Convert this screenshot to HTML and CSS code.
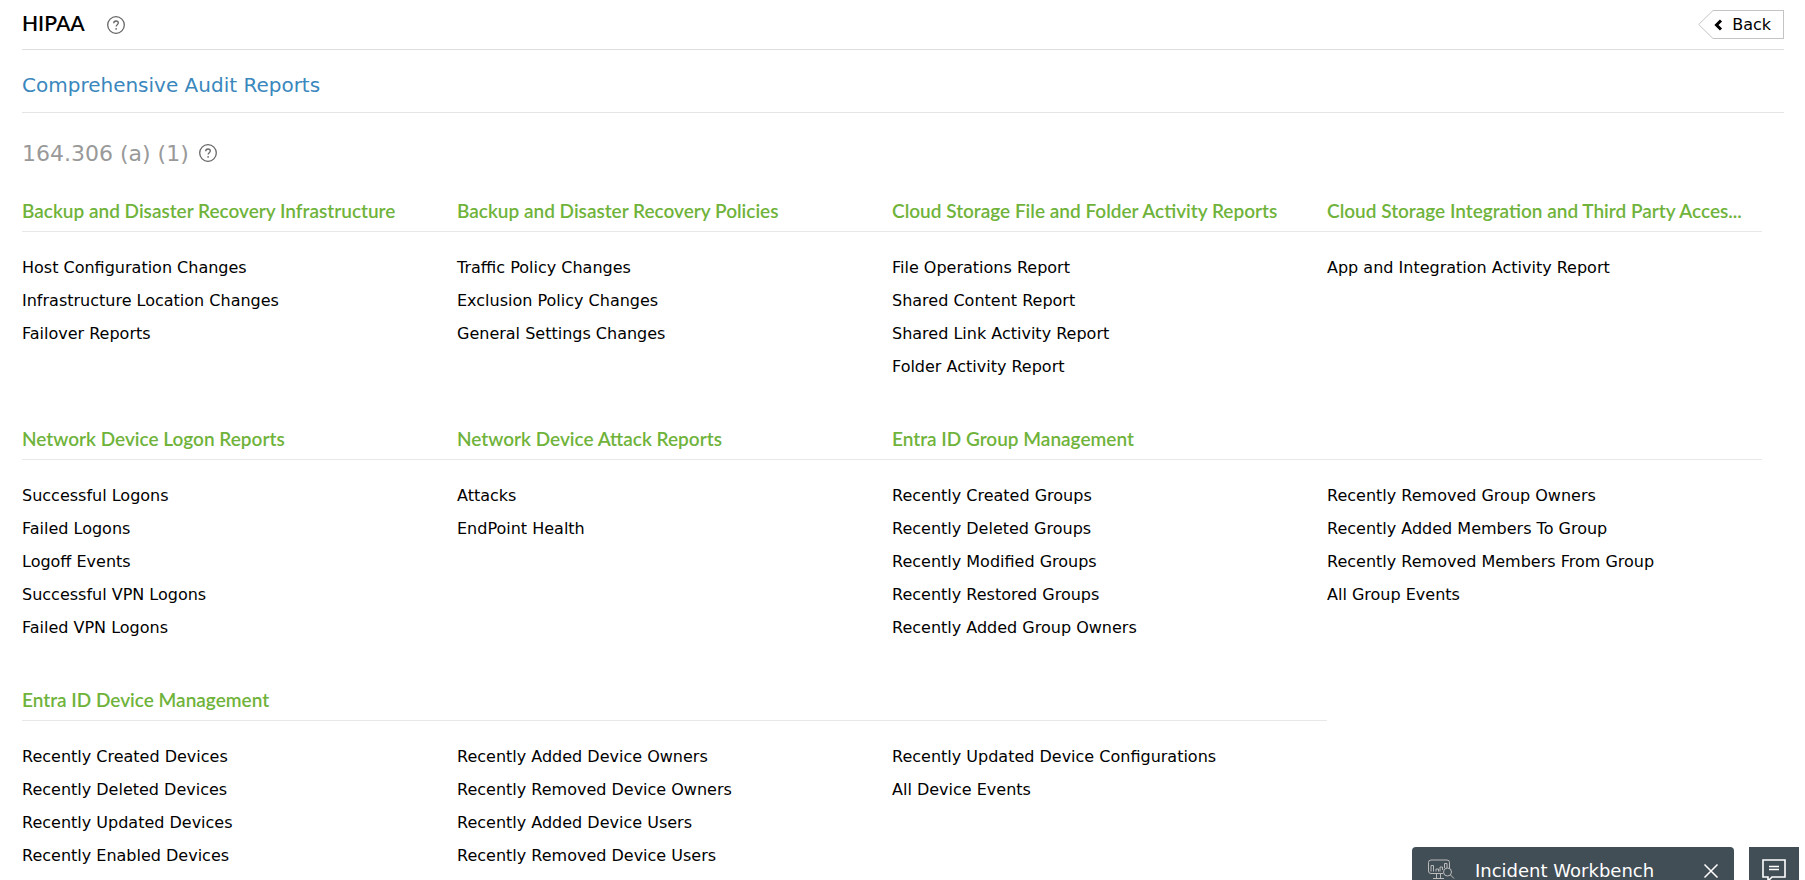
FILE: index.html
```html
<!DOCTYPE html>
<html lang="en">
<head>
  <meta charset="UTF-8" />
  <meta name="viewport" content="width=device-width, initial-scale=1.0"/>
  <title>HIPAA - Comprehensive Audit Reports</title>
  <link rel="stylesheet" href="styles.css">
</head>
<body>
  <div class="container">
    <header class="page-header">
      <h1>HIPAA</h1>
      <button type="button" class="help" aria-label="Help">
        <svg width="18" height="18" viewBox="0 0 18 18"><circle cx="9" cy="9" r="8.3"/><path d="M6.7 7.2C6.8 5.7 7.7 5 9 5c1.400 0 2.300.8 2.300 2 0 1.600-2.200 1.700-2.200 3.500M9.100 12v1.800"/></svg>
      </button>
      <button type="button" class="back">
        <svg class="back-tip" width="16" height="29" viewBox="0 0 16 29"><path d="M16 .5h-1L.7 14.500 15 28.500h1"/></svg>
        <span class="back-body">
          <svg width="9" height="12" viewBox="0 0 9 12"><path d="M7 1.500 2.500 6 7 10.500"/></svg>
          Back
        </span>
      </button>
    </header>

    <div class="report-title">
      <a href="#">Comprehensive Audit Reports</a>
    </div>

    <div class="section-title">
      <h2>164.306 (a) (1)</h2>
      <button type="button" class="help" aria-label="Help">
        <svg width="18" height="18" viewBox="0 0 18 18"><circle cx="9" cy="9" r="8.3"/><path d="M6.7 7.2C6.8 5.7 7.7 5 9 5c1.400 0 2.300.8 2.300 2 0 1.600-2.200 1.700-2.200 3.500M9.100 12v1.800"/></svg>
      </button>
    </div>

    <main class="groups">
      <section class="group">
        <h3>Backup and Disaster Recovery Infrastructure</h3>
        <ul>
          <li><a href="#">Host Configuration Changes</a></li>
          <li><a href="#">Infrastructure Location Changes</a></li>
          <li><a href="#">Failover Reports</a></li>
        </ul>
      </section>
      <section class="group">
        <h3>Backup and Disaster Recovery Policies</h3>
        <ul>
          <li><a href="#">Traffic Policy Changes</a></li>
          <li><a href="#">Exclusion Policy Changes</a></li>
          <li><a href="#">General Settings Changes</a></li>
        </ul>
      </section>
      <section class="group">
        <h3>Cloud Storage File and Folder Activity Reports</h3>
        <ul>
          <li><a href="#">File Operations Report</a></li>
          <li><a href="#">Shared Content Report</a></li>
          <li><a href="#">Shared Link Activity Report</a></li>
          <li><a href="#">Folder Activity Report</a></li>
        </ul>
      </section>
      <section class="group">
        <h3>Cloud Storage Integration and Third Party Acces...</h3>
        <ul>
          <li><a href="#">App and Integration Activity Report</a></li>
        </ul>
      </section>

      <section class="group">
        <h3>Network Device Logon Reports</h3>
        <ul>
          <li><a href="#">Successful Logons</a></li>
          <li><a href="#">Failed Logons</a></li>
          <li><a href="#">Logoff Events</a></li>
          <li><a href="#">Successful VPN Logons</a></li>
          <li><a href="#">Failed VPN Logons</a></li>
        </ul>
      </section>
      <section class="group">
        <h3>Network Device Attack Reports</h3>
        <ul>
          <li><a href="#">Attacks</a></li>
          <li><a href="#">EndPoint Health</a></li>
        </ul>
      </section>
      <section class="group group-2">
        <h3>Entra ID Group Management</h3>
        <div class="lists">
          <ul>
            <li><a href="#">Recently Created Groups</a></li>
            <li><a href="#">Recently Deleted Groups</a></li>
            <li><a href="#">Recently Modified Groups</a></li>
            <li><a href="#">Recently Restored Groups</a></li>
            <li><a href="#">Recently Added Group Owners</a></li>
          </ul>
          <ul>
            <li><a href="#">Recently Removed Group Owners</a></li>
            <li><a href="#">Recently Added Members To Group</a></li>
            <li><a href="#">Recently Removed Members From Group</a></li>
            <li><a href="#">All Group Events</a></li>
          </ul>
        </div>
      </section>

      <section class="group group-3">
        <h3>Entra ID Device Management</h3>
        <div class="lists">
          <ul>
            <li><a href="#">Recently Created Devices</a></li>
            <li><a href="#">Recently Deleted Devices</a></li>
            <li><a href="#">Recently Updated Devices</a></li>
            <li><a href="#">Recently Enabled Devices</a></li>
          </ul>
          <ul>
            <li><a href="#">Recently Added Device Owners</a></li>
            <li><a href="#">Recently Removed Device Owners</a></li>
            <li><a href="#">Recently Added Device Users</a></li>
            <li><a href="#">Recently Removed Device Users</a></li>
          </ul>
          <ul>
            <li><a href="#">Recently Updated Device Configurations</a></li>
            <li><a href="#">All Device Events</a></li>
          </ul>
        </div>
      </section>
    </main>
  </div>

  <div class="dock">
    <div class="workbench">
      <svg class="workbench-icon" width="28" height="24" viewBox="0 0 28 24">
        <path d="M16 14.500H4A2.500 2.500 0 0 1 1.500 12V3.500A2.500 2.500 0 0 1 4 1h16a2.500 2.500 0 0 1 2.500 2.500V9M9.500 14.500V19M13.500 14.500V19M6 19.500h11"/>
        <path d="M4 12.500V6.500h2.500v6M9 12.500V10h2.500v2.500M13 12.500V8h2.500v3M17.500 9V4.500H20V9"/>
        <circle cx="20.500" cy="13" r="4"/><path d="m23.500 16 3.500 3.500"/>
      </svg>
      <span>Incident Workbench</span>
      <button type="button" class="close" aria-label="Close">
        <svg width="16" height="16" viewBox="0 0 16 16"><path d="m1.500 1.500 13 13M14.500 1.500l-13 13"/></svg>
      </button>
    </div>
    <button type="button" class="chat" aria-label="Chat">
      <svg width="24" height="24" viewBox="0 0 24 24"><path d="M1 1h22v17H10l-4 4v-4H1zM7 7.500h10M7 10.500h10"/></svg>
    </button>
  </div>
</body>
</html>
```
FILE: styles.css
```css
* {
  margin: 0;
  padding: 0;
  box-sizing: border-box;
}

body, html {
  height: 100%;
  overflow: hidden;
}

body {
  font-family: Verdana, 'DejaVu Sans', sans-serif;
  font-size: 16px;
  color: #000;
  background-color: #fff;
}

a {
  color: inherit;
  text-decoration: none;
}

button {
  font: inherit;
  color: inherit;
  background: none;
  border: none;
  cursor: pointer;
}

svg {
  display: block;
  fill: none;
  stroke: currentColor;
}

.container {
  padding: 0 21px 0 22px;
}

.page-header {
  display: flex;
  align-items: center;
  height: 50px;
  border-bottom: 1px solid #ddd;
}

.page-header h1 {
  margin-right: 22px;
  padding-bottom: 4px;
  font-family: Lato, sans-serif;
  font-size: 21px;
  font-weight: 600;
}

.help {
  color: #666;
  stroke-width: 1.3;
}

.back {
  display: flex;
  margin-left: auto;
}

.back-tip {
  color: #c4c4c4;
}

.back-body {
  display: flex;
  align-items: center;
  gap: 9px;
  height: 29px;
  padding-right: 12px;
  border: 1px solid #c4c4c4;
  border-left: none;
}

.back-body svg {
  stroke-width: 3;
}

.report-title {
  display: flex;
  align-items: center;
  height: 63px;
  padding-top: 8px;
  border-bottom: 1px solid #e5e5e5;
  font-size: 20px;
  color: #3a87bd;
}

.section-title {
  display: flex;
  align-items: center;
  gap: 10px;
  height: 80px;
  color: #999;
}

.section-title h2 {
  font-size: 22px;
  font-weight: normal;
}

.groups {
  display: grid;
  grid-template-columns: repeat(4, minmax(0, 1fr));
  row-gap: 38px;
  padding-right: 22px;
}

.group-2 {
  grid-column: span 2;
}

.group-3 {
  grid-column: span 3;
}

.group h3 {
  height: 39px;
  padding-right: 8px;
  border-bottom: 1px solid #e8e8e8;
  font-family: Lato, sans-serif;
  font-size: 19px;
  font-weight: 600;
  line-height: 35px;
  color: #6fb33b;
  white-space: nowrap;
  overflow: hidden;
  text-overflow: ellipsis;
}

.group ul {
  padding-top: 19px;
  list-style: none;
}

.group li {
  line-height: 33px;
}

.lists {
  display: grid;
  grid-auto-columns: minmax(0, 1fr);
  grid-auto-flow: column;
}

/* bottom bar */
.dock {
  position: fixed;
  right: 6px;
  bottom: 0;
  display: flex;
  gap: 15px;
  height: 33px;
  overflow: hidden;
  color: #fff;
}

.workbench {
  display: flex;
  align-items: center;
  width: 322px;
  height: 47px;
  padding: 0 15px;
  border-radius: 4px 4px 0 0;
  background-color: #424e56;
  font-size: 18px;
}

.workbench-icon {
  margin-right: 20px;
  color: #bbb;
}

.close {
  margin-left: auto;
  stroke-width: 1.5;
}

.chat {
  width: 50px;
  height: 48px;
  padding-left: 13px;
  background-color: #424e56;
  stroke-width: 1.6;
}
```
